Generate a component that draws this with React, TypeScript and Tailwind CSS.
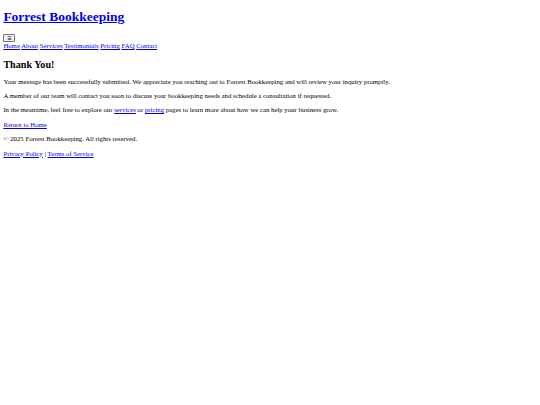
const link = "text-[#0000ee] underline";

export default function App() {
  return (
    <div className="min-h-[405px] bg-white px-[3.375px] pb-[3.375px] font-['Liberation_Serif','Times_New_Roman',serif] text-[6.75px] leading-[7.76px] text-black">
      <header>
        <h1 className="my-[9.05px] pt-0 text-[13.5px] font-bold leading-[15.53px]">
          <a href="#" className={link}>
            Forrest Bookkeeping
          </a>
        </h1>
        <div className="flex h-[8.86px] items-start">
          <button className="mt-[0.4px] flex h-[8.2px] w-[12px] items-center justify-center rounded-[1px] border border-[#767676] bg-[#efefef] font-['DejaVu_Sans',sans-serif] text-[5px] leading-none text-black">
            ☰
          </button>
        </div>
        <nav>
          <a href="#" className={link}>Home</a>{" "}
          <a href="#" className={link}>About</a>{" "}
          <a href="#" className={link}>Services</a>{" "}
          <a href="#" className={link}>Testimonials</a>{" "}
          <a href="#" className={link}>Pricing</a>{" "}
          <a href="#" className={link}>FAQ</a>{" "}
          <a href="#" className={link}>Contact</a>
        </nav>
      </header>

      <main>
        <h2 className="mt-[8.4px] mb-[7.3px] text-[10.125px] font-bold leading-[11.64px]">Thank You!</h2>
        <p className="my-[6.65px]">
          Your message has been successfully submitted. We appreciate you reaching out to Forrest Bookkeeping and will review your inquiry promptly.
        </p>
        <p className="my-[6.65px]">
          A member of our team will contact you soon to discuss your bookkeeping needs and schedule a consultation if requested.
        </p>
        <p className="my-[6.65px]">
          In the meantime, feel free to explore our{" "}
          <a href="#" className={link}>services</a> or{" "}
          <a href="#" className={link}>pricing</a> pages to learn more about how we can help your business grow.
        </p>
        <p className="my-[6.65px]">
          <a href="#" className={link}>Return to Home</a>
        </p>
      </main>

      <footer>
        <p className="my-[6.65px]">© 2025 Forrest Bookkeeping. All rights reserved.</p>
        <p className="my-[6.65px]">
          <a href="#" className={link}>Privacy Policy</a> |{" "}
          <a href="#" className={link}>Terms of Service</a>
        </p>
      </footer>
    </div>
  );
}
